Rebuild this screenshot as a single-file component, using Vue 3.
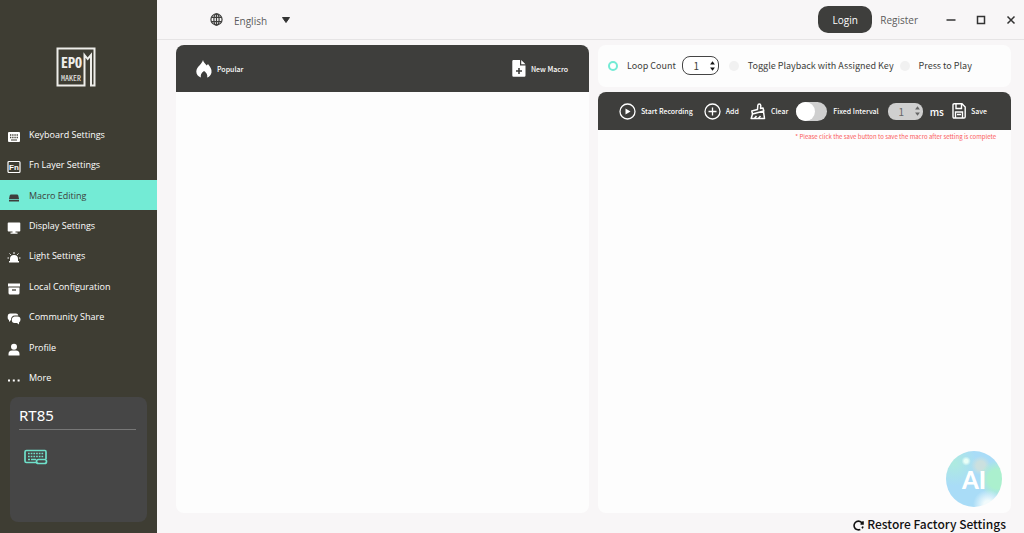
<script setup>
import { ref } from 'vue'

const active = ref('Macro Editing')
const items = [
  { label: 'Keyboard Settings', icon: 'keyboard' },
  { label: 'Fn Layer Settings', icon: 'fn' },
  { label: 'Macro Editing', icon: 'macro' },
  { label: 'Display Settings', icon: 'display' },
  { label: 'Light Settings', icon: 'light' },
  { label: 'Local Configuration', icon: 'archive' },
  { label: 'Community Share', icon: 'chat' },
  { label: 'Profile', icon: 'profile' },
  { label: 'More', icon: 'more' }
]
const language = ref('English')
const mode = ref('loop')
const loops = ref(1)
const fixed = ref(false)
const interval = ref(1)
</script>

<template>
  <div class="app">
    <aside class="sidebar">
      <svg class="logo" viewBox="0 0 40 40" role="img" aria-label="Epomaker">
        <path d="M38.500 1.500H1.500V38.500H28.500V8L31.700 12L35 8V38.500H38.500Z" fill="none" stroke="#eeeeea" stroke-width="2" />
        <text x="5" y="21" class="logo-top">EPO</text>
        <text x="5" y="34" class="logo-bottom">MAKER</text>
      </svg>
      <nav class="nav">
        <a v-for="item in items" :key="item.label" href="#" class="nav-item" :class="{ active: active === item.label }" @click.prevent="active = item.label">
          <svg class="nav-icon" viewBox="0 0 14 14" aria-hidden="true">
            <template v-if="item.icon === 'keyboard'">
              <rect x="1" y="2" width="12" height="10" rx="1" fill="currentColor" />
              <path d="M3 5h8M3 7.500h8" stroke="#3e3d33" stroke-width="1.300" stroke-dasharray="1.300 .9" />
              <path d="M4 10h6" stroke="#3e3d33" />
            </template>
            <template v-else-if="item.icon === 'fn'">
              <rect x="1" y="1.500" width="12" height="11" rx="1" fill="none" stroke="currentColor" stroke-width="1.200" />
              <text x="7" y="10" text-anchor="middle" class="fn">Fn</text>
            </template>
            <path v-else-if="item.icon === 'macro'" d="M4 3.500h6q1 0 1.300 1L12 8H2l.7-3.500q.3-1 1.300-1zM2 8.700h10v1.800H2z" fill="currentColor" />
            <path v-else-if="item.icon === 'display'" d="M1.500 1.500h11q.8 0 .8.800v7.400q0 .8-.8.800H8.500v1h2v1.200H3.500v-1.200h2v-1h-4q-.8 0-.8-.8V2.300q0-.8.800-.8z" fill="currentColor" />
            <template v-else-if="item.icon === 'light'">
              <path d="M3 10V8a4 4 0 0 1 8 0v2h1v1.500H2V10z" fill="currentColor" />
              <path d="M7 1v2M2.500 2.500l1.300 1.300M11.500 2.500l-1.300 1.300M.5 7H2M12 7h1.500" stroke="currentColor" />
            </template>
            <template v-else-if="item.icon === 'archive'">
              <path d="M1 1.500h12v3H1zM1.500 5.500h11V11q0 1.500-1.500 1.500H3Q1.500 12.500 1.500 11z" fill="currentColor" />
              <path d="M5 8h4" stroke="#3e3d33" stroke-width="1.300" />
            </template>
            <template v-else-if="item.icon === 'chat'">
              <path d="M3 1.500h6q2 0 2.300 2H8q-4 0-4 4.500l-2 2V8Q.7 7.500.7 6V4q0-2.500 2.300-2.500z" fill="currentColor" />
              <path d="M7.500 4.500h3q3 0 3 3 0 2-1.500 3v2l-2-1.500H7.500q-2.700 0-2.700-3t2.700-3.500z" fill="currentColor" />
            </template>
            <path v-else-if="item.icon === 'profile'" d="M7 .7a3 3 0 1 1 0 6 3 3 0 0 1 0-6zM1.500 12.500v-1.500Q1.500 7.500 5 7.500h4q3.500 0 3.500 3.500v1.500z" fill="currentColor" />
            <path v-else d="M1 6.500h2v2H1zM5.800 6.500h2v2h-2zM10.600 6.500h2v2h-2z" fill="currentColor" />
          </svg>
          <span>{{ item.label }}</span>
        </a>
      </nav>
      <section class="device">
        <h2>RT85</h2>
        <svg width="24" height="16" viewBox="0 0 24 16" fill="none" stroke="#6fe0ca" aria-hidden="true">
          <path d="M13 13.500H2.500Q1 13.500 1 12V3q0-1.500 1.500-1.500h18.500Q22 1.500 22 3v7" stroke-width="1.700" />
          <path d="M4 4.500h16M4 7.500h16" stroke-width="1.700" stroke-dasharray="1.700 1" />
          <path d="M4 10.500h2M7 10.500h5" stroke-width="1.500" />
          <rect x="12.500" y="10.500" width="10" height="4" rx="2" stroke-width="1.700" />
        </svg>
      </section>
    </aside>

    <div class="content">
      <header class="topbar">
        <label class="language">
          <svg width="13" height="13" viewBox="0 0 14 14" fill="none" stroke="#3e3e3c" stroke-width="1.300" role="img" aria-label="Language">
            <circle cx="7" cy="7" r="6" /><ellipse cx="7" cy="7" rx="2.800" ry="6" /><path d="M7 1v12M1.500 4.800h11M1.500 9.200h11" />
          </svg>
          <select v-model="language"><option>English</option></select>
          <svg width="8" height="6" viewBox="0 0 8 6" aria-hidden="true"><path d="M.5.500h7L4 5.500z" fill="#333" stroke="#333" stroke-linejoin="round" /></svg>
        </label>
        <div class="account">
          <button class="login">Login</button>
          <button class="register">Register</button>
        </div>
        <div class="window">
          <button aria-label="Minimize"><svg viewBox="0 0 10 10"><path d="M.5 5h9" /></svg></button>
          <button aria-label="Maximize"><svg viewBox="0 0 10 10"><rect x="1.500" y="1.500" width="7" height="7" /></svg></button>
          <button aria-label="Close"><svg viewBox="0 0 10 10"><path d="M1.500 1.500l7 7M8.500 1.500l-7 7" /></svg></button>
        </div>
      </header>

      <main class="workspace">
        <section class="panel">
          <div class="bar list-bar">
            <h3 class="popular">
              <svg width="16" height="18" viewBox="0 0 16 18" aria-hidden="true"><path d="M7 0c.5 2.500 2.500 3.500 3.700 5.500L12 4c2 2.500 4 5 3.500 8.500-.4 2.700-2.200 4.600-4.500 5 .8-1.500.2-4.500-3-6.500C5 13 4.300 15.500 5 17.500 2 16.500.3 14.500.3 11.500c0-2.800 1.700-4.500 3.400-6.300C5.200 3.700 6.300 2.200 7 0z" fill="#fff" /></svg>
              Popular
            </h3>
            <button class="action">
              <svg width="14" height="17" viewBox="0 0 14 17" aria-hidden="true"><path d="M1.500 0H8v5.500h5.500v10q0 1.200-1.200 1.200H1.500Q.3 16.700.3 15.500V1.200Q.3 0 1.500 0zM9.200 0l4.300 4.300H9.200z" fill="#fff" /><path d="M7 8v6M4 11h6" stroke="#3e3e3c" stroke-width="1.600" /></svg>
              New Macro
            </button>
          </div>
        </section>

        <div class="right">
          <form class="modes" @submit.prevent>
            <label class="mode"><input v-model="mode" type="radio" name="mode" value="loop">Loop Count</label>
            <span class="stepper">
              <input v-model="loops" type="number" min="1" aria-label="Loop count value">
              <span class="arrows">
                <button type="button" aria-label="More loops" @click="loops++"><svg viewBox="0 0 6 5"><path d="M0 4.500L3 .3l3 4.200z" /></svg></button>
                <button type="button" aria-label="Fewer loops" @click="loops--"><svg viewBox="0 0 6 5"><path d="M0 .5h6L3 4.700z" /></svg></button>
              </span>
            </span>
            <label class="mode"><input v-model="mode" type="radio" name="mode" value="toggle">Toggle Playback with Assigned Key</label>
            <label class="mode"><input v-model="mode" type="radio" name="mode" value="press">Press to Play</label>
          </form>

          <section class="panel editor">
            <div class="bar tools">
              <button class="action">
                <svg width="17" height="17" viewBox="0 0 17 17" fill="none" stroke="#fff" stroke-width="1.300" aria-hidden="true"><circle cx="8.500" cy="8.500" r="7.500" /><path d="M6.500 5.500v6l5-3z" fill="#fff" stroke="none" /></svg>
                Start Recording
              </button>
              <button class="action">
                <svg width="17" height="17" viewBox="0 0 17 17" fill="none" stroke="#fff" stroke-width="1.300" aria-hidden="true"><circle cx="8.500" cy="8.500" r="7.500" /><path d="M8.500 4.500v8M4.500 8.500h8" /></svg>
                Add
              </button>
              <button class="action">
                <svg width="16" height="17" viewBox="0 0 16 17" fill="none" stroke="#fff" stroke-width="1.500" stroke-linejoin="round" aria-hidden="true"><path d="M7.500 6.500L7.800 2.500q.2-1.500 1.500-1.500t1.500 1.500l-.3 3 2.500-.5.800 3L2.500 11 1.800 8zM2.500 11L1.200 15.500h13.300L13.500 8.500M4.500 15.300l2-2.300M8.500 15.300l2-2.300" /></svg>
                Clear
              </button>
              <label class="fixed"><input v-model="fixed" type="checkbox" role="switch">Fixed Interval</label>
              <span class="stepper muted">
                <input v-model="interval" type="number" min="1" :disabled="!fixed" aria-label="Interval in milliseconds">
                <span class="arrows">
                  <button type="button" :disabled="!fixed" aria-label="Longer interval" @click="interval++"><svg viewBox="0 0 6 5"><path d="M0 4.500L3 .3l3 4.200z" /></svg></button>
                  <button type="button" :disabled="!fixed" aria-label="Shorter interval" @click="interval--"><svg viewBox="0 0 6 5"><path d="M0 .5h6L3 4.700z" /></svg></button>
                </span>
              </span>
              <span class="unit">ms</span>
              <button class="action">
                <svg width="14" height="16" viewBox="0 0 14 16" fill="none" stroke="#fff" stroke-width="1.400" aria-hidden="true"><path d="M1 2q0-1.200 1.200-1.200H10L13.200 4v9.800q0 1.200-1.200 1.200H2.200Q1 15 1 13.800zM4 1v4.500h5.500V1M3.500 15V9h7v6M5 11.500h4" /></svg>
                Save
              </button>
            </div>
            <p class="notice">* Please click the save button to save the macro after setting is complete</p>
            <button class="assistant">AI</button>
          </section>
        </div>
      </main>

      <footer class="footer">
        <button class="restore">
          <svg width="11" height="11" viewBox="0 0 11 11" fill="none" stroke="#111" stroke-width="1.600" aria-hidden="true"><path d="M9.500 3.700A4.400 4.400 0 1 0 7.300 9.500M9.900 6.500A4.400 4.400 0 0 1 9 8.300M10 1.300v2.700H7.500" /></svg>
          Restore Factory Settings
        </button>
      </footer>
    </div>
  </div>
</template>

<style>
body { margin: 0; }
</style>

<style scoped>
* { box-sizing: border-box; }
.app { display: flex; height: 100vh; overflow: hidden; background: #f8f6f7; color: #3e3e3c; font-family: "Noto Sans CJK SC", sans-serif; }
button { padding: 0; border: 0; background: none; color: inherit; font: inherit; cursor: pointer; }
svg { flex: none; }

.sidebar { display: flex; flex-direction: column; flex: none; width: 157px; background: #3e3d33; color: #fff; font-family: "Open Sans", sans-serif; }
.logo { width: 40px; height: 40px; margin: 47px 0 32px 56px; }
.logo-top { fill: #eeeeea; font: bold 14px "Noto Sans Mono CJK SC", "Liberation Mono", monospace; }
.logo-bottom { fill: #eeeeea; font: 8px "Noto Sans Mono CJK SC", "Liberation Mono", monospace; }
.nav { display: grid; flex: none; grid-auto-rows: 1fr; height: 274px; }
.nav-item { display: flex; align-items: center; gap: 8px; padding: 1px 0 0 7px; color: inherit; font-size: 9px; line-height: 12px; text-decoration: none; }
.nav-item.active { background: #73ebd5; color: #3e3e3c; }
.nav-icon { width: 14px; height: 14px; margin-top: 4px; }
.fn { fill: currentColor; font: bold 8px "Liberation Sans", sans-serif; }
.device { flex: 1; margin: 4px 10px 11px; padding: 7px 11px 0 9px; border-radius: 8px; background: #464646; }
.device h2 { margin: 0 0 19px; padding-bottom: 3px; border-bottom: 1px solid #777; color: #fff; font: 15px/22px "Noto Sans", sans-serif; }
.device svg { display: block; margin-left: 5px; }

.content { display: flex; flex: 1; flex-direction: column; min-width: 0; }
.topbar { display: flex; align-items: center; height: 40px; padding: 0 8px 0 53px; border-bottom: 1px solid #e6e4e5; font-family: "Open Sans", sans-serif; font-size: 10px; }
.language { display: flex; align-items: center; color: #5c5c5c; }
select { width: 48px; margin-left: 11px; padding: 2px 0 0; border: 0; appearance: none; background: none; color: inherit; font: inherit; }
.account { display: flex; align-items: center; gap: 8px; margin-left: auto; }
.login { width: 54px; height: 27px; border-radius: 10px; background: #3e3e3c; color: #fff; }
.register { color: #5c5c5c; }
.window { display: flex; gap: 20px; margin-left: 28px; }
.window button { display: flex; }
.window svg { width: 10px; height: 10px; fill: none; stroke: #333; stroke-width: 1.5; }

.workspace { display: grid; flex: 1; grid-template-columns: 1fr 1fr; gap: 9px; min-height: 0; padding: 5px 13px 0 19px; }
.panel { display: flex; flex-direction: column; min-width: 0; overflow: hidden; border-radius: 8px; background: #fdfdfd; }
.bar { display: flex; align-items: center; background: #3e3e3c; color: #fff; font-size: 7px; font-weight: 500; }
.list-bar { justify-content: space-between; height: 47px; padding: 0 21px 0 20px; }
.popular { display: flex; align-items: center; gap: 5px; margin: 0; font-size: 7px; font-weight: 500; }
.action { display: flex; align-items: center; gap: 5px; white-space: nowrap; }
.right { display: flex; flex-direction: column; gap: 5px; min-width: 0; }
.modes { display: flex; align-items: center; height: 42px; padding: 0 0 1px 10px; border-radius: 8px; background: #fdfdfd; font-size: 9px; }
.mode { display: flex; align-items: center; gap: 9px; margin-right: 6px; white-space: nowrap; }
.mode input { width: 10px; height: 10px; margin: 0; border-radius: 50%; appearance: none; background: #f1f1f1; }
.mode input:checked { border: 2px solid #73ebd5; background: #fff; }
.stepper { display: flex; flex: none; align-items: center; width: 37px; height: 19px; margin-right: 10px; padding-right: 3px; border: 1px solid #444; border-radius: 8px; background: #fff; }
.stepper input { flex: 1; width: 0; min-width: 0; padding: 0; border: 0; appearance: textfield; background: none; color: inherit; font: 10px "Noto Sans CJK SC", sans-serif; text-align: center; }
.stepper input::-webkit-inner-spin-button { display: none; }
.arrows { display: flex; flex-direction: column; gap: 2px; }
.arrows button { display: flex; }
.arrows svg { width: 5px; height: 4px; fill: #111; }
.editor { position: relative; flex: 1; }
.tools { height: 38px; padding-left: 21px; }
.tools .action { margin-right: 11px; }
.fixed { display: flex; align-items: center; gap: 6px; margin: 0 9px 0 -3px; white-space: nowrap; }
.fixed input { display: flex; width: 31px; height: 19px; margin: 0; border-radius: 10px; appearance: none; background: #cfcfcf; }
.fixed input::before { width: 19px; height: 19px; border-radius: 50%; background: #fff; content: ""; }
.fixed input:checked { justify-content: flex-end; background: #73ebd5; }
.muted { width: 35px; height: 17px; margin-right: 7px; border: 0; background: #cfcfcf; color: #666; }
.muted svg { fill: #666; }
.unit { margin-right: 8px; font-size: 10px; }
.notice { margin: 2px 15px 0; color: #fb5c5c; font-size: 6px; line-height: 10px; text-align: right; }
.assistant { position: absolute; right: 9px; bottom: 6px; width: 56px; height: 56px; border-radius: 50%; background: radial-gradient(circle at 36% 18%, #e9fff7 0 3%, transparent 8%), radial-gradient(circle at 75% 96%, #f2fbfc 0 6%, transparent 22%), radial-gradient(circle at 92% 50%, #abf0ce 0 16%, transparent 32%), radial-gradient(circle at 62% 26%, #cbe0df 0 8%, transparent 18%), radial-gradient(circle at 15% 22%, #aeebdf, transparent 35%), #a9dcf7; color: #fff; font: 900 24px Lato, sans-serif; }
.footer { display: flex; justify-content: flex-end; flex: none; height: 20px; padding: 2px 18px 0 0; }
.restore { display: flex; align-items: center; gap: 3px; height: 18px; color: #111; font-size: 12px; font-weight: 500; line-height: 18px; }
.restore svg { margin-top: 2px; }
</style>
